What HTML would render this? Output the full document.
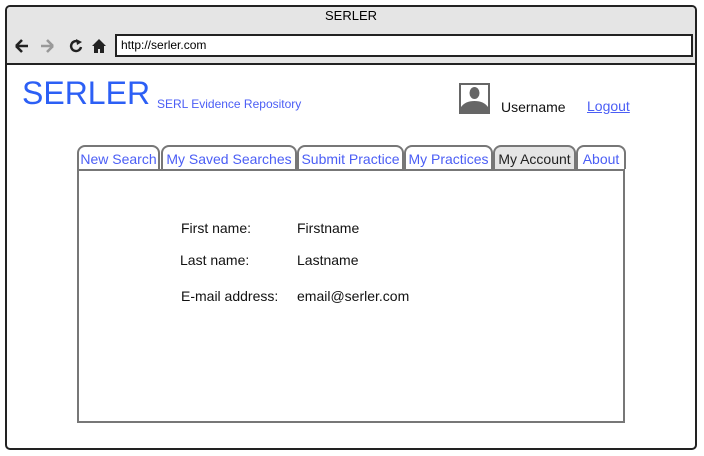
<!DOCTYPE html>
<html><head><style>
body{margin:0;width:704px;height:456px;background:#fff;font-family:"Liberation Sans",sans-serif;position:relative;overflow:hidden}
.a{position:absolute}
.frame{left:5px;top:5px;width:688px;height:441px;border:2px solid #222;border-radius:5px;overflow:hidden}
.bar{left:0;top:0;width:688px;height:56px;background:#e5e5e5;border-bottom:2px solid #222}
.tab{position:absolute;top:145px;height:24px;border:2px solid #777;border-bottom:none;border-radius:8px 8px 0 0;background:#fff;color:#4b5ef5;font-size:14px;line-height:24px;text-align:center;box-sizing:border-box}
.lbl{font-size:14px;color:#111}
</style></head><body>
<div class="a frame">
<div class="a bar">
 <div class="a" style="left:0;width:688px;top:1px;text-align:center;font-size:13px">SERLER</div>
 <svg class="a" style="left:6px;top:30px" width="100" height="20">
  <path d="M3 9h12M3 9l6-6M3 9l6 6" stroke="#222" stroke-width="2.6" fill="none"/>
  <path d="M28 9h12M40 9l-6-6M40 9l-6 6" stroke="#999" stroke-width="2.6" fill="none"/>
  <path d="M66 5a5 5 0 1 0 2 5" stroke="#222" stroke-width="2.4" fill="none"/><path d="M63 2l6 3-5 3z" fill="#222"/>
  <path d="M79 9l7-7 7 7h-2v7h-4v-4h-2v4h-4v-7z" fill="#222"/>
 </svg>
 <div class="a" style="left:108px;top:27px;width:570px;height:19px;border:2px solid #222;background:#fff;font-size:12px;line-height:19px;padding-left:4px">http://serler.com</div>
</div>
</div>
<div class="a" style="left:22px;top:75px;font-size:32px;color:#2c5ff5">SERLER</div>
<div class="a" style="left:157px;top:97px;font-size:12px;color:#4b5ef5">SERL Evidence Repository</div>
<svg class="a" style="left:459px;top:83px" width="31" height="31"><rect width="31" height="31" fill="#666"/><rect x="2" y="2" width="27" height="27" fill="#fff"/><ellipse cx="15.5" cy="10" rx="5" ry="6" fill="#666"/><path d="M2 29v-5c3-4 7-6 13.5-6s10.5 2 13.5 6v5z" fill="#666"/></svg>
<div class="a" style="left:501px;top:99px;font-size:14px;color:#111">Username</div>
<div class="a" style="left:587px;top:98px;font-size:14px;color:#4b5ef5;text-decoration:underline">Logout</div>
<div class="a" style="left:77px;top:169px;width:544px;height:250px;border:2px solid #777"></div>
<div class="tab" style="left:77px;width:83px">New Search</div>
<div class="tab" style="left:161px;width:136px">My Saved Searches</div>
<div class="tab" style="left:297px;width:107px">Submit Practice</div>
<div class="tab" style="left:404px;width:89px">My Practices</div>
<div class="tab" style="left:493px;width:83px;background:#e5e5e5;color:#222">My Account</div>
<div class="tab" style="left:576px;width:50px">About</div>
<div class="a lbl" style="left:181px;top:220px">First name:</div>
<div class="a lbl" style="left:297px;top:220px">Firstname</div>
<div class="a lbl" style="left:180px;top:252px">Last name:</div>
<div class="a lbl" style="left:297px;top:252px">Lastname</div>
<div class="a lbl" style="left:181px;top:288px">E-mail address:</div>
<div class="a lbl" style="left:297px;top:288px">email@serler.com</div>
</body></html>
